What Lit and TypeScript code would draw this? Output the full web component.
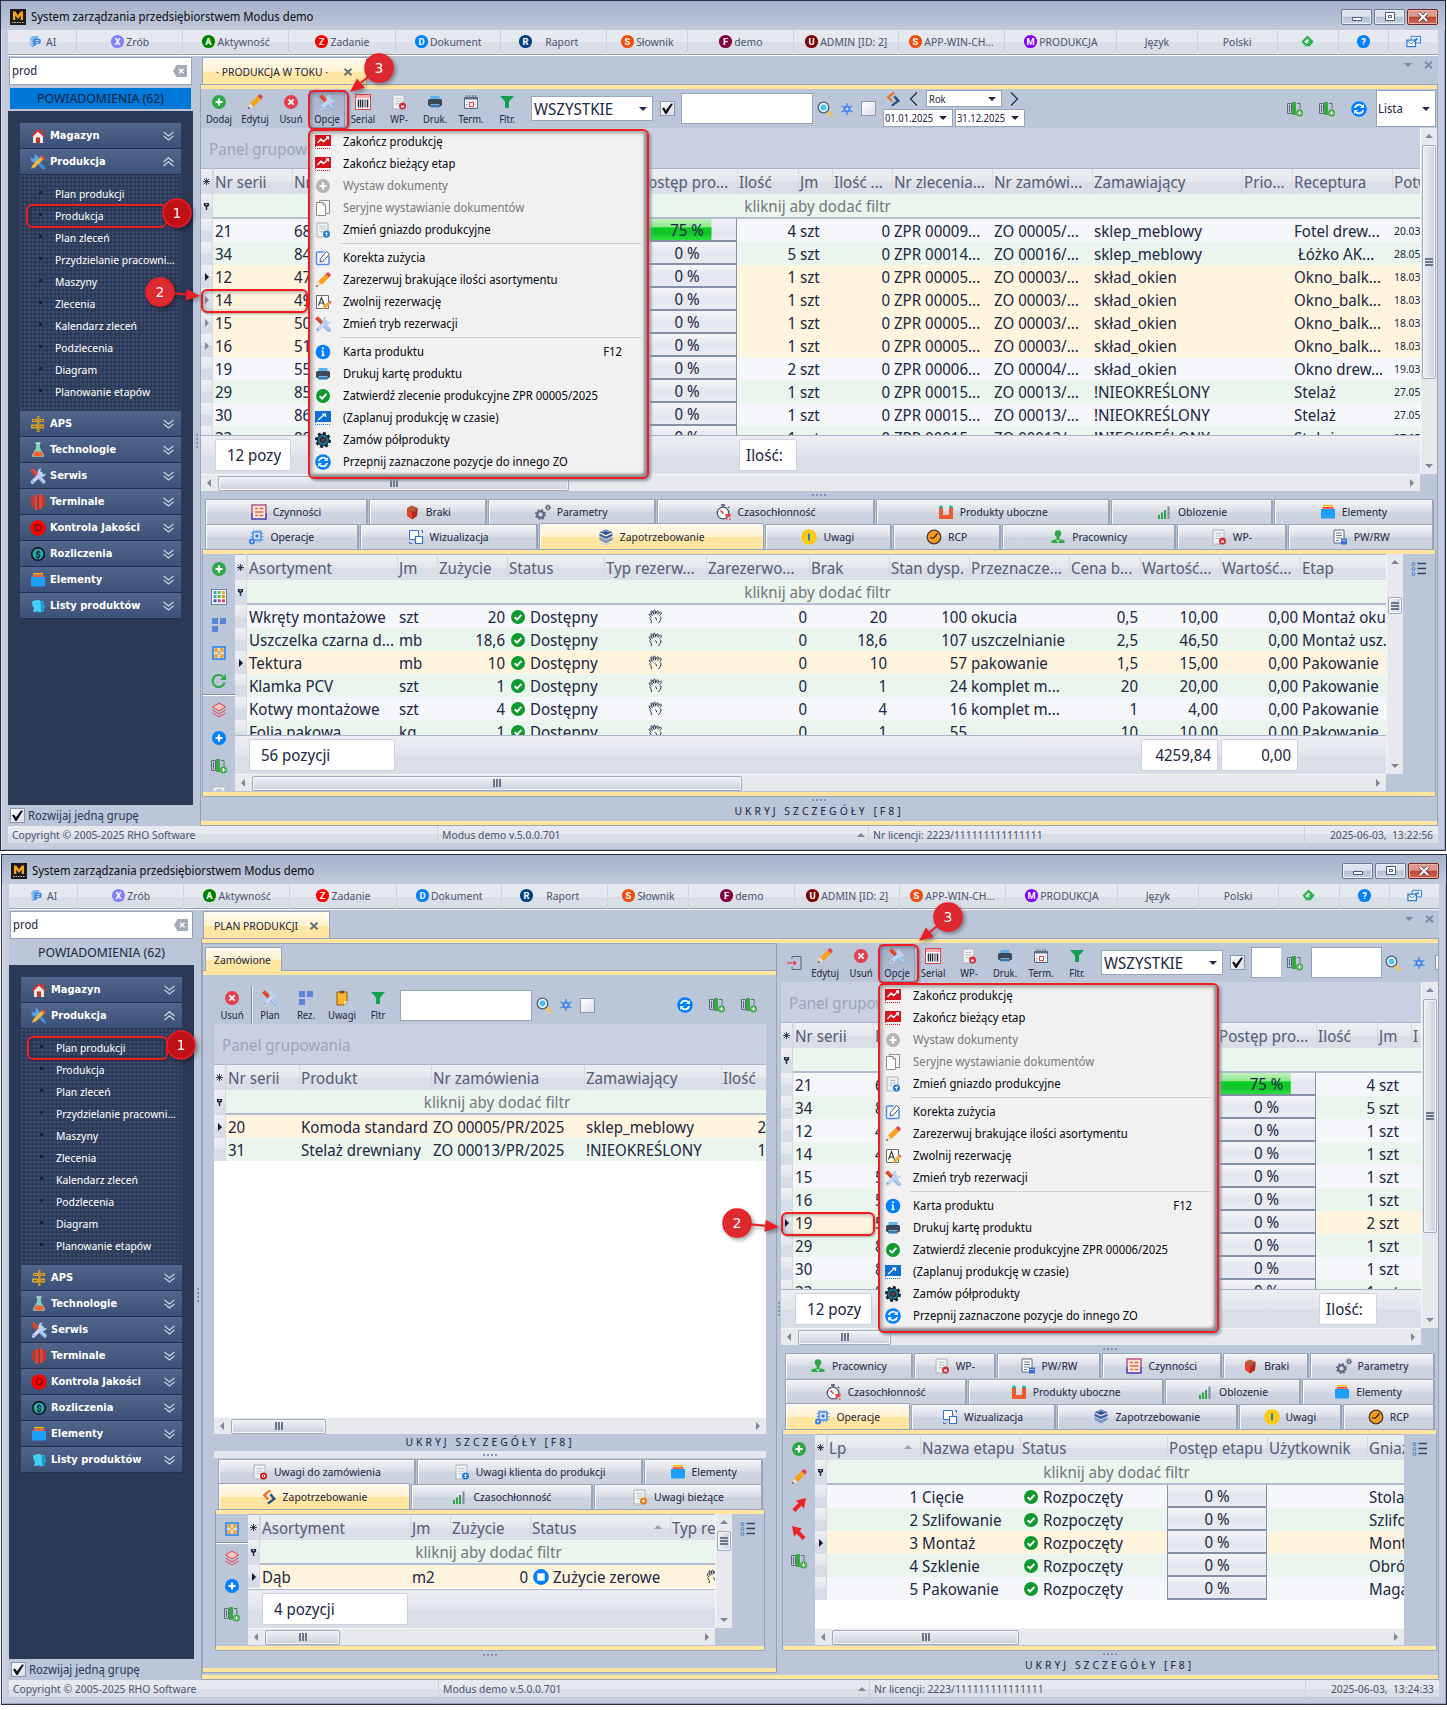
import { LitElement, html, svg, css, nothing, TemplateResult } from "lit";
import { customElement, property } from "lit/decorators.js";
import { classMap } from "lit/directives/class-map.js";

type Draw = ReturnType<typeof svg>;

const disc = (fill: string, letter: string): Draw => svg`
  <circle cx="8" cy="8" r="7" fill=${fill} />
  <text x="8" y="11.500" text-anchor="middle" font-size="10" font-weight="700" fill="#fff" font-family="Roboto, sans-serif">${letter}</text>`;

const docBase = svg`<path d="M2 1h11v14H2z" fill="#eef1f2" stroke="#aab3ba" /><path d="M4.500 4.500h6M4.500 7h6M4.500 9.500h4" stroke="#b9c6c4" fill="none" />`;
const columnsPlus = svg`
  <path d="M.5 2.500h4v10h-4zM10 2.500h3v6" fill="#c3cbd6" stroke="#5a6880" />
  <path d="M2.500 4v7" stroke="#5a6880" />
  <rect x="5" y="1" width="4" height="13" fill="#3aa845" />
  <circle cx="12.500" cy="12" r="3.500" fill="#3aa845" /><path d="M12.500 10v4M10.500 12h4" stroke="#fff" stroke-width="1.200" />`;
const boxes = svg`<path d="M1 1h6v6H1zM9 1h6v6H9zM1 9h6v6H1z" fill="#5b86d8" />`;
const pencil = svg`
  <path d="M3 9.500 10.500 2l3.500 3.500L6.500 13z" fill="#f9a11b" />
  <path d="M10.500 2 12 .8a1.500 1.500 0 0 1 2 0L15.300 2a1.500 1.500 0 0 1 0 2L14 5.500z" fill="#e0444c" />
  <path d="M3 9.500 1 15l5.500-2z" fill="#f3dfc0" /><path d="M1.800 12.800 1 15l2.200-.8z" fill="#333c4c" />`;
const wrenchDriver = svg`
  <path d="m8 8 5.800 5.800" stroke="#8fb4e8" stroke-width="4" stroke-linecap="round" />
  <path d="m9 8.500 5 5" stroke="#c3d9f6" stroke-width="1.500" stroke-linecap="round" />
  <path d="m0 2.800 3-2.600L8.800 6 6 8.800z" fill="#e4502f" /><path d="M1.500 2.500 6.500 7.500" stroke="#a83a22" />
  <path d="M2.500 14 11 5.500" stroke="#c4d6f4" stroke-width="3.600" stroke-linecap="round" />
  <path d="M11.500.5a4.200 4.200 0 1 0 4.300 5L13 6.500 10 3.600z" fill="#bcd2f2" /><circle cx="2.700" cy="13.500" r="1.100" fill="#7f9fd0" />`;
const magnifier = svg`
  <path d="m10.500 10.500 4 4" stroke="#f2c14b" stroke-width="3" stroke-linecap="round" />
  <circle cx="6.500" cy="6.500" r="5.300" fill="#e9f7fd" stroke="#4b6172" stroke-width="1.300" /><circle cx="6.500" cy="6.500" r="3" fill="#4fc0ee" />`;
const zigzag = svg`<path d="M0 1h16v11H0z" fill="#d4141c" /><path d="m2.500 9 3.500-4 2.500 2.500L13.500 3M11 3h2.500v2.500" fill="none" stroke="#fff" stroke-width="1.300" /><path d="M.5 2v12.500H16" fill="none" stroke="#d4141c" stroke-dasharray="1 1" />`;

const ICONS: Record<string, Draw> = {
  logo: svg`<rect width="16" height="16" fill="#1d1a17" /><path d="M3 11V2.500h2.400L8 6.500l2.600-4H13V11h-2.300V6.500L8 10 5.300 6.500V11z" fill="#f9a51a" /><path d="M2 13.500h12" stroke="#cfcac0" stroke-dasharray="1.500 1" />`,
  ai: svg`<path d="M2 5 5 2h6l-1 9-5 3-3-2z" fill="#7ab6f0" /><path d="M6 5h6a1.500 1.500 0 0 1 1.500 1.500V9a1.500 1.500 0 0 1-1.500 1.500H8v2H6z" fill="#3b82e0" /><path d="M8 7h4M8 9h3" stroke="#cfe2fa" /><path d="M3 6v6" stroke="#cfe6fb" />`,
  dX: disc("#8080ff", "X"), dA: disc("#008000", "A"), dZ: disc("#ff0000", "Z"), dD: disc("#0080ff", "D"), dR: disc("#004080", "R"),
  dS: disc("#f04e0c", "S"), dF: disc("#800040", "F"), dU: disc("#800000", "U"), dM: disc("#8000ff", "M"), help: disc("#0080ff", "?"),
  feedly: svg`<path d="m8 1.500 6.500 6.500-4.300 5H5.800L1.500 8z" fill="#2bb24c" /><path d="m5 8.500 3-3 1.200 1.200L6.500 9.500zM7 11l2.500-2.500" fill="#fff" stroke="#fff" stroke-width=".8" />`,
  cards: svg`<path d="M5.500 2.500h10v7h-10z" fill="#e8f1fb" stroke="#2a7bd6" /><path d="M1 6.500h9v7H1z" fill="#fff" stroke="#2a7bd6" stroke-width="1.300" /><path d="m1 7 4.500 3.500L10 7M9 5.500h4M11.500 4v3" fill="none" stroke="#2a7bd6" />`,
  house: svg`<path d="M3 8v7h10V8L8 3.500z" fill="#f5e9e0" /><path d="M8 1 .8 8l1.200 1.200 6-5.700 6 5.700L15.200 8z" fill="#dd3030" /><path d="M6 15V9.500h4V15z" fill="#c0392b" /><path d="M11 2h2v3l-2-2z" fill="#dd3030" />`,
  tools: svg`<path d="m13.500 14-8.500-9" stroke="#3f8fe0" stroke-width="3" stroke-linecap="round" /><path d="M.8 3.500 3 5.300 5 3 3.800.8a4 4 0 1 1-3 2.700z" fill="#5aa5ec" /><path d="m2.500 11 9-9.300 2.800 2.800L5 13.500l-4 1.300z" fill="#f7b43c" /><path d="m10.300 3 1.700-1.700 2.800 2.800L13 5.700z" fill="#e2572f" />`,
  aps: svg`<path d="M7 0h2.500v16H7z" fill="#c99624" /><path d="M2 3h5v3H2zM9.500 3H14v3H9.500zM1 8.500h6v4H1zM9.500 8.500H14v4H9.500z" fill="#d9a92f" /><path d="M3 4.500h3M10.500 4.500H13M2.500 10.500H6M10.500 10.500H13" stroke="#7a5612" />`,
  flask: svg`<path d="M6 1h4v5l4 6.500A2 2 0 0 1 13 15H3a2 2 0 0 1-1-2.500L6 6z" fill="#7fd0bc" /><path d="M4.500 9.500h7l2 3-1.500 2H4l-1.500-2z" fill="#f0683a" /><path d="M5.500 1h5" stroke="#d5ece6" stroke-width="1.300" />`,
  driver: wrenchDriver,
  bars: svg`<path d="M1 2.500h3v10H1zM12 2.500h3v10h-3z" fill="#c0392b" /><path d="M4.500 1H8v15H4.500zM8.500 0H12v15H8.500z" fill="#d9473a" /><path d="M8 1v15" stroke="#8d2a20" />`,
  quality: svg`<circle cx="8" cy="8" r="7.700" fill="#ff0000" /><circle cx="8" cy="7.600" r="3" fill="none" stroke="#7a0b10" stroke-width="1.200" /><path d="m9.300 9 1.700 2" stroke="#7a0b10" stroke-width="1.200" />`,
  dollar: svg`<circle cx="8" cy="8" r="7" fill="#0b0f14" /><circle cx="8" cy="8" r="5.500" fill="#27a9a9" /><text x="8" y="11.500" font-size="9" font-weight="700" text-anchor="middle" fill="#06161a" font-family="Roboto, sans-serif">$</text>`,
  box: svg`<path d="M3 1h10v1.500H3z" fill="#ffb400" /><path d="M2.500 3h11v2h-11z" fill="#f0604a" /><path d="M1 5h14v8.500a1 1 0 0 1-1 1H2a1 1 0 0 1-1-1z" fill="#1ea0f8" />`,
  puzzle: svg`<path d="M2 3.500 6 2h3l2 1.500h3V7l1 1.500-1 2V13l-4 1.500-2-1-5 .5 1-4-1.500-2z" fill="#44cdf5" /><path d="M10.500 4H14v9l-3 1z" fill="#1e9cd0" />`,
  plus: svg`<circle cx="8" cy="8" r="7" fill="#2fa84a" /><path d="M8 4.500v7M4.500 8h7" stroke="#fff" stroke-width="2.200" />`,
  plusBlue: svg`<circle cx="8" cy="8" r="7" fill="#0080ff" /><path d="M8 4.500v7M4.500 8h7" stroke="#fff" stroke-width="2.200" />`,
  plusGray: svg`<circle cx="8" cy="8" r="7" fill="#b4b4b4" /><path d="M8 4.500v7M4.500 8h7" stroke="#fff" stroke-width="2.200" />`,
  pencil,
  cross: svg`<circle cx="8" cy="8" r="7" fill="#e53e4e" /><path d="m5.300 5.300 5.400 5.400M10.700 5.300l-5.400 5.400" stroke="#fff" stroke-width="1.800" />`,
  barcode: svg`<path d="M.5.5h15v15H.5z" fill="#fff" stroke="#e0404a" /><path d="M1 1h14v3H1z" fill="#f5a9ad" /><path d="M3.500 5.500v8M7.500 5.500v8M12.500 5.500v8" stroke="#222b3a" stroke-width="1.600" /><path d="M5.500 5.500v8M10 5.500v8" stroke="#222b3a" />`,
  docRed: svg`${docBase}<circle cx="11.500" cy="12" r="3.500" fill="#dc2a36" /><path d="M10 11.500h3v2h-3z" fill="#fff" />`,
  docRound: svg`${docBase}<circle cx="11.500" cy="12" r="3.500" fill="#dd1515" /><circle cx="11.500" cy="12" r="1.300" fill="none" stroke="#fff" />`,
  docBlue: svg`${docBase}<circle cx="11.500" cy="12" r="3.500" fill="#1f7fd6" /><path d="M11.500 14v-3.500M10 12l1.500-1.500L13 12" fill="none" stroke="#fff" />`,
  docOrange: svg`${docBase}<circle cx="11.500" cy="12" r="3.500" fill="#f07818" /><circle cx="11.500" cy="12" r="1.300" fill="#fff" />`,
  printer: svg`<path d="M3.500 2h9v3h-9z" fill="#5db1f2" /><rect x="1" y="5" width="14" height="7" rx="1.500" fill="#3e4957" /><path d="M3.500 10h9v4h-9z" fill="#67b8f5" /><path d="M3 12h10" stroke="#28323f" />`,
  calendar: svg`<path d="M1.500 3.500h13v11h-13z" fill="#fff" stroke="#5a6880" /><path d="M1.500 3h13v2.500h-13z" fill="#5a6880" /><path d="M4 1v3M7 1v3M10 1v3M12.500 1v3" stroke="#5a6880" /><path d="M3 8h10M3 10.500h10M3 13h10" stroke="#8a96aa" stroke-dasharray="1.500 1.500" /><path d="M6.500 8.500h4v4h-4z" fill="#fff" stroke="#e0404a" />`,
  funnel: svg`<path d="M1 2h14l-5 5.500V14H6V7.500z" fill="#10a050" />`,
  magnifier,
  spark: svg`<path d="M8 2v12M2.500 5l11 6M13.500 5l-11 6" stroke="#4286f0" stroke-width="1.300" /><circle cx="8" cy="8" r="3.500" fill="#4286f0" /><circle cx="8" cy="8" r="1.500" fill="#c9dbf8" />`,
  swap: svg`<path d="M8.500.5 1.500 6l4.800 5.200L8 9.500 5 6.200l5-4z" fill="#e8762c" /><path d="M7.500 15.500 15 10 10.300 4.500 8.500 6.300l3 3.500-5.300 4z" fill="#1d4f8a" />`,
  columnsPlus,
  refresh: svg`<circle cx="8" cy="8" r="7.800" fill="#0080ff" /><path d="M3.800 7A4.300 4.300 0 0 1 11 4.800M12.200 9A4.300 4.300 0 0 1 5 11.200" fill="none" stroke="#fff" stroke-width="1.800" /><path d="M12.800 3v4H9zM3.200 13V9H7z" fill="#fff" />`,
  list: svg`<circle cx="2.500" cy="3" r="1.500" fill="none" stroke="#3f7fc8" /><circle cx="2.500" cy="8" r="1.500" fill="none" stroke="#3f7fc8" /><circle cx="2.500" cy="13" r="1.500" fill="none" stroke="#3f7fc8" /><path d="M6.500 2.500H15M6.500 7.500H15M6.500 12.500H15" stroke="#33415c" stroke-width="1.300" />`,
  palette: svg`<rect x=".5" y=".5" width="15" height="15" fill="#fff" stroke="#6a7fae" /><path d="M2.500 3.500h3M2.500 7.500h3" stroke="#3aa0d8" stroke-width="3" /><path d="M6.700 3.500h3M6.700 7.500h3" stroke="#5cb84a" stroke-width="3" /><path d="M11 3.500h3" stroke="#f2a73b" stroke-width="3" /><path d="M11 7.500h3" stroke="#e88b28" stroke-width="3" /><path d="M2.500 11.800h3" stroke="#3a5fd0" stroke-width="3" /><path d="M6.700 11.800h3" stroke="#b040a8" stroke-width="3" /><path d="M11 11.800h3" stroke="#e0404a" stroke-width="3" />`,
  boxes,
  expand: svg`<path d="M2 2h12v12H2z" fill="#d9dfe6" stroke="#1f80f0" stroke-width="1.500" /><path d="m4.500 4.500 7 7M11.500 4.500l-7 7M4 7V4h3M9 4h3v3M12 9v3H9M7 12H4V9" fill="none" stroke="#f0a020" stroke-width="1.300" />`,
  reload: svg`<path d="M13.500 9.500A6 6 0 1 1 12 3.800" fill="none" stroke="#2fa84a" stroke-width="2.200" /><path d="M15 1v6H9z" fill="#2fa84a" />`,
  layersRed: svg`<path d="m8 1 6.500 4L8 9 1.500 5z" fill="#f7c2c2" stroke="#e0404a" /><path d="m1.500 8 6.500 4 6.500-4M1.500 11 8 15l6.500-4" fill="none" stroke="#e0404a" />`,
  minus: svg`<path d="M2 1h12v14H2z" fill="#f2f4f6" stroke="#b6bec8" /><path d="M5 4h6" stroke="#9aa4b0" />`,
  grid: svg`<rect x="1" y="1" width="14" height="14" fill="#fde8dd" stroke="#c05a90" stroke-width="1.600" /><path d="M4 4.500h3M8.500 4.500h4M4 8h8.500M4 11.500h3M8.500 11.500h4" stroke="#e8663a" stroke-width="1.400" /><path d="M1 9v6h14V9" fill="none" stroke="#4a5cc0" stroke-width="1.600" />`,
  cube: svg`<path d="m3 4 5-2.500L13.500 4 13 12l-5 3.500L3 12z" fill="#e5432d" /><path d="m8 7.500 5.500-3.500L13 12l-5 3.500z" fill="#b52a1c" /><path d="m5 3 5 2.500V8" fill="none" stroke="#5f8a58" stroke-width="1.500" />`,
  gears: svg`<circle cx="5.500" cy="10.500" r="3.300" fill="none" stroke="#56627a" stroke-width="2" /><circle cx="5.500" cy="10.500" r="4.800" fill="none" stroke="#56627a" stroke-dasharray="1.800 2" stroke-width="1.400" /><circle cx="13" cy="3.500" r="1.600" fill="none" stroke="#56627a" stroke-width="1.300" /><circle cx="13" cy="3.500" r="2.700" fill="none" stroke="#56627a" stroke-dasharray="1 1" />`,
  stopwatch: svg`<circle cx="7" cy="9" r="5.800" fill="#fff" stroke="#4a566c" stroke-width="1.300" /><path d="M7 1v2M5 1h4M12 3l1.500 1" stroke="#4a566c" stroke-width="1.300" /><path d="m4.500 6.500 3 3" stroke="#e0303c" stroke-width="1.500" /><path d="M9 10h6l-1 3h-4z" fill="#e8434e" /><path d="M10 15h1.500M13 15h1.500" stroke="#e8434e" stroke-width="1.500" />`,
  magnet: svg`<path d="M1 4h4v7h6V4h4v11H1z" fill="#f2592a" /><path d="M1 4V2.500L4 1l1 3zM11 4l1-3 3 1.500V4z" fill="#17b5a6" />`,
  chart: svg`<path d="M3 15v-4M6 15V8.500M9 15V6" stroke="#2fa84a" stroke-width="2" /><path d="M12.500 15V2.500" stroke="#7f8ca3" stroke-width="2" />`,
  chip: svg`<rect x="4" y="2" width="10" height="10" rx="1" fill="#6a9df0" /><path d="M6 .5v13M9 .5v13M12 .5v13M2.500 4.500h13M2.500 7.500h13M2.500 10.500h13" stroke="#6a9df0" /><path d="M6 4h6v6H6z" fill="#dfeafc" /><path d="M7.500 5.500h3v3h-3z" fill="#3a72d0" /><circle cx="4" cy="12.500" r="3" fill="#3f7fe8" /><circle cx="4" cy="12.500" r="1.100" fill="#e2ecfb" />`,
  frames: svg`<path d="M1.500 1.500h9v9h-9z" fill="#fff" stroke="#3a6fd0" /><path d="M7.500 7.500h7v7h-7z" fill="#fff" stroke="#3a6fd0" stroke-width="1.200" /><path d="M13 1.500h1.500V4M1.500 13v1.500H4" fill="none" stroke="#3a6fd0" />`,
  stack: svg`<path d="m8 .5 6.500 2.700L8 6 1.500 3.200z" fill="#2f4f8f" /><path d="m1.500 4.500 6.500 3 6.500-3V7L8 10 1.500 7z" fill="#3a5ea5" /><path d="m1.500 8 6.500 3 6.500-3v3L8 14.500 1.500 11z" fill="#7f9ac8" /><path d="m4 3.200 4-1.500 4 1.500" fill="none" stroke="#84b4e8" /><path d="m3 14 5 2 5-2" stroke="#c8d4e8" fill="none" />`,
  note: svg`<circle cx="8" cy="8" r="7.800" fill="#fdc912" /><path d="M8 4.500v7" stroke="#2b7fb8" stroke-width="2" />`,
  clock: svg`<circle cx="8" cy="8" r="6.800" fill="#f79a1e" stroke="#463c34" stroke-width="1.300" /><path d="M7 9.500 11.500 4.500M7 9.500l-3-1" stroke="#2b2622" stroke-width="1.300" />`,
  person: svg`<circle cx="8" cy="4.500" r="3.300" fill="#2fa84a" /><path d="M6.500 6h3v4l5 1.500V14h-13v-2.500l5-1.500z" fill="#2fa84a" /><path d="M8 11v3M6 10.500 8 13l2-2.500" stroke="#bfe8c8" fill="none" />`,
  sheet: svg`<path d="M2 1h10v13H2z" fill="#fff" stroke="#5a6880" /><path d="M4 4h6M4 6.500h6M4 9h6M4 11.500h3" stroke="#6b7a94" /><path d="M9 9.500h6v6H9z" fill="#3f6fd0" /><path d="M10 11.500h4" stroke="#9cc0f5" />`,
  clip: svg`<path d="M3 2h10v9l-3 4H3z" fill="#fbb62a" stroke="#8a5a10" /><path d="M6 .8h4v2.500H6z" fill="#6b4a20" /><path d="M13 11h-3v4z" fill="#fff2c8" />`,
  arrowNE: svg`<path d="m1.500 12 6-6L5 3.500 15 1l-2 10.500-2.700-2.700L4.300 15z" fill="#f01f24" />`,
  arrowNW: svg`<path d="m14.500 12-6-6L11 3.500 1 1l2 10.500 2.700-2.700 6 6.200z" fill="#f01f24" />`,
  login: svg`<path d="M6 4V1.500h9v13H6V12" fill="none" stroke="#56627a" /><path d="M1 8h8" stroke="#e8434e" stroke-width="1.300" /><path d="m7.500 5.200 3.500 2.800-3.500 2.800z" fill="#e8434e" />`,
  zigzag,
  plan: svg`<path d="M0 1h16v11H0z" fill="#0f6fd6" /><path d="m3 10 7-6M7 4h3.500v3" fill="none" stroke="#fff" stroke-width="1.200" /><path d="M.5 2v12.500H16" fill="none" stroke="#0f6fd6" stroke-dasharray="1 1" />`,
  pages: svg`<path d="M4.500.5h10v13h-10z" fill="#f4f4f4" stroke="#8e8e8e" /><path d="M1.500 2.500H8l2.500 2.500v10.500h-9z" fill="#fff" stroke="#8e8e8e" /><path d="M8 2.500V5h2.500" fill="none" stroke="#8e8e8e" />`,
  edit: svg`<path d="M14 6v7.500a1 1 0 0 1-1 1H2.500a1 1 0 0 1-1-1V3a1 1 0 0 1 1-1H9" fill="#f4f8ff" stroke="#4f8ff0" stroke-width="1.500" /><path d="m5.500 8.500 6-7 3 2.500-6 7-3.500 1z" fill="#fff" stroke="#49546a" />`,
  letterPen: svg`<path d="M1.500 1.500h12v13h-12z" fill="#fff" stroke="#6a6a6a" /><path d="m3.500 11.500 3-8 3 8M4.500 9h4" fill="none" stroke="#333" stroke-width="1.100" /><path d="m8.500 12.500 5-5 2 2-5 5-2.500.5z" fill="#f7a823" /><path d="m13.500 7.500 1-1 2 2-1 1z" fill="#e0444c" />`,
  info: svg`<circle cx="8" cy="8" r="7.300" fill="#0080ff" /><path d="M8 7v4.500M6.700 7H8M6.500 11.500h3" stroke="#fff" stroke-width="1.500" /><circle cx="8" cy="4.300" r="1.100" fill="#fff" />`,
  check: svg`<circle cx="8" cy="8" r="7" fill="#0f9a2e" /><path d="m4.700 8.200 2.400 2.400 4.300-4.700" fill="none" stroke="#fff" stroke-width="2" />`,
  stop: svg`<circle cx="8" cy="8" r="7.900" fill="#0080ff" /><path d="M4.300 4.300h7.400v7.400H4.300z" fill="#fff" />`,
  cog: svg`<circle cx="8" cy="8" r="6.700" fill="none" stroke="#10242e" stroke-width="2.600" stroke-dasharray="3 2.200" /><circle cx="8" cy="8" r="5.800" fill="#1c6c86" stroke="#10242e" /><circle cx="8" cy="8" r="2.500" fill="#7b3a3a" stroke="#10242e" />`,
  hand: svg`<path d="M3.500 9 1.500 6.500c-.6-1.500.8-2 1.500-1L5 7.500M4.500 6 3 3c0-1.300 1.400-1.400 1.700-.3L6.500 6M6.200 5 6 2c.3-1.100 1.600-1 1.700.1L8.200 5.500M8.500 4.500 9.300 2.500c.6-1 1.900-.5 1.700.5L10.500 6M1.500 9 3.500 12v3M11.500 4.500l1.500-1c1.200-.3 1.700.8 1 1.700L12.500 7M13 8l1 1.500-1 3-2 2.500M8 9l1.500 3" fill="none" stroke="#1f2a44" />`,
};

const icon = (name: string) => html`<svg class="icon" viewBox="0 0 16 16" aria-hidden="true">${ICONS[name]}</svg>`;
const arrowDown = html`<svg class="caret" viewBox="0 0 8 4" aria-hidden="true"><path d="M0 0h8L4 4z" fill="currentColor" /></svg>`;

interface Col { t: string; w?: number; k?: "n" | "p" | "s" | "h" | "d"; sort?: boolean }
interface Row { c: string[]; sel?: boolean; mark?: "cur" | "multi" }
interface Foot { w: number; t?: string; right?: boolean }
interface Scroll { lead: number; size: number }
interface GridSpec {
  cols: Col[]; rows: Row[]; size: string; group?: boolean; foot?: Foot[];
  h: Scroll; v?: Scroll; overlay?: TemplateResult; label: string;
}
interface Tab { i: string; t: string; w: number; on?: boolean }

const cell = (col: Col, value: string) => {
  if (col.k === "p") {
    return html`<div class="progress" style="background-size:${value}% 100%, 100% 100%">${value} %</div>`;
  }
  if (col.k === "h") return icon("hand");
  if (col.k === "s") return html`<span class="status">${icon(value.startsWith("Zuż") ? "stop" : "check")}${value}</span>`;
  return value;
};

const hscroll = (s: Scroll) => html`
  <div class="hscroll">
    <i class="tri left"></i><span class="thumb" style="width:${s.size}px"><b></b></span><i class="tri right"></i>
  </div>`;
const vscroll = (s: Scroll) => html`
  <div class="vscroll">
    <i class="tri up"></i><span class="thumb" style="margin-top:${s.lead}px;height:${s.size}px"><b></b></span><i class="tri down"></i>
  </div>`;

const grid = (g: GridSpec) => html`
  <div class=${classMap({ grid: true, "has-v": !!g.v })}>
    <div class="grid-main">
      ${g.group ? html`<div class="group-panel">Panel grupowania</div>` : nothing}
      <div class="viewport ${g.size}">
        <table aria-label=${g.label}>
          <colgroup><col class="c-ind">${g.cols.map(c => c.w ? html`<col style="width:${c.w}px">` : html`<col>`)}</colgroup>
          <thead>
            <tr><th class="ind"><svg viewBox="0 0 8 8" class="tiny"><path d="M4 0v8M0 4h8M1 1l6 6M7 1 1 7" stroke="#1f2a44" /></svg></th>
              ${g.cols.map(c => html`<th scope="col">${c.t}${c.sort ? html`<i class="tri up sort"></i>` : nothing}</th>`)}</tr>
            <tr class="filter"><td class="ind"><svg viewBox="0 0 8 8" class="tiny"><path d="M1 0h6v3L4.800 4.500V8H3.200V4.500L1 3z" fill="#1f2a44" /><path d="M3 1.500h2" stroke="#fff" /></svg></td>
              <td colspan=${g.cols.length}>kliknij aby dodać filtr</td></tr>
          </thead>
          <tbody>
            ${g.rows.map((r, i) => html`
              <tr class=${classMap({ sel: !!r.sel, even: i % 2 === 1 })}>
                <td class="ind">${r.mark ? html`<i class="tri right ${r.mark}"></i>` : nothing}</td>
                ${g.cols.map((c, j) => html`<td class="k-${c.k ?? "t"}">${cell(c, r.c[j] ?? "")}</td>`)}
              </tr>`)}
          </tbody>
        </table>
      </div>
      ${g.foot ? html`<div class="foot"><span class="foot-lead"></span>${g.foot.map(f => html`
        <span class="foot-slot" style="width:${f.w}px">${f.t ? html`<output class=${classMap({ sum: true, right: !!f.right })}><span>${f.t}</span></output>` : nothing}</span>`)}</div>` : nothing}
    </div>
    ${g.v ? vscroll(g.v) : nothing}
    ${hscroll(g.h)}
    ${g.overlay ?? nothing}
  </div>`;

const tabRow = (tabs: Tab[]) => html`
  <div class="tabs" role="tablist">${tabs.map(t => html`
    <button role="tab" aria-selected=${t.on ? "true" : "false"} class=${classMap({ tab: true, on: !!t.on })} style="flex-grow:${t.w}">${icon(t.i)}<span>${t.t}</span></button>`)}
  </div>`;

const sideTools = (names: string[], label: string) => html`
  <div class="side-tools" aria-label=${label}>${names.map(n => n === "-" ? html`<hr>` : html`<button aria-label=${n}>${icon(n)}</button>`)}</div>`;

const detail = (tools: string[], g: GridSpec) => html`
  <section class="panel">
    ${sideTools(tools, "Narzędzia")}
    <div class="panel-grid">${grid(g)}</div>
    <div class="side-tools"><button aria-label="Kolumny">${icon("list")}</button></div>
  </section>`;

/* Numbered callout: disc at the origin, arrow towards (x, y). */
const callout = (n: number, cls: string, x = 0, y = 0) => {
  const len = Math.hypot(x, y);
  const ux = len ? x / len : 0, uy = len ? y / len : 0;
  const bx = x - ux * 14, by = y - uy * 14;
  return html`<svg class="callout ${cls}" viewBox="-16 -16 32 32" aria-hidden="true">
    ${len ? svg`<path d="M${ux * 13} ${uy * 13}L${bx} ${by}" stroke="#ee1c24" stroke-width="2" />
      <path d="M${x} ${y}L${bx - uy * 6} ${by + ux * 6}L${bx + uy * 6} ${by - ux * 6}z" fill="#ee1c24" />` : nothing}
    <circle r="14" fill=${n === 1 ? "#bf1016" : "#dc2a30"} stroke="#ee1c24" stroke-width="1.500" />
    <text y="5" text-anchor="middle" class="num">${n}</text>
  </svg>`;
};

const toolButton = (i: string, t: string) => html`<button class="tool">${icon(i)}<span>${t}</span></button>`;
const checkbox = (label: string, on = false) => html`<input class="check" type="checkbox" aria-label=${label} ?checked=${on}>`;
const combo = (cls: string, value: string, label: string) => html`
  <span class="combo ${cls}"><select aria-label=${label}><option>${value}</option></select>${arrowDown}</span>`;

const contextMenu = (order: string) => {
  const items: (null | [string, string, string?, boolean?])[] = [
    ["zigzag", "Zakończ produkcję"], ["zigzag", "Zakończ bieżący etap"], ["plusGray", "Wystaw dokumenty", "", true],
    ["pages", "Seryjne wystawianie dokumentów", "", true], ["docBlue", "Zmień gniazdo produkcyjne"], null,
    ["edit", "Korekta zużycia"], ["pencil", "Zarezerwuj brakujące ilości asortymentu"], ["letterPen", "Zwolnij rezerwację"],
    ["driver", "Zmień tryb rezerwacji"], null, ["info", "Karta produktu", "F12"], ["printer", "Drukuj kartę produktu"],
    ["check", `Zatwierdź zlecenie produkcyjne ZPR ${order}`], ["plan", "(Zaplanuj produkcję w czasie)"],
    ["cog", "Zamów półprodukty"], ["refresh", "Przepnij zaznaczone pozycje do innego ZO"],
  ];
  return html`<div class="menu" role="menu">${items.map(m => m
    ? html`<button role="menuitem" class="menu-item" ?disabled=${!!m[3]}>${icon(m[0])}<span>${m[1]}</span>${m[2] ? html`<kbd>${m[2]}</kbd>` : nothing}</button>`
    : html`<hr>`)}</div>`;
};

const options = (order: string) => html`
  <div class="anchor">
    <button class="tool pressed" aria-haspopup="menu">${icon("driver")}<span>Opcje</span></button>
    <span class="mark mark-tool"></span>
    ${contextMenu(order)}
    ${callout(3, "at-tool", -29, 24)}
  </div>`;

const orderTools = (order: string) => html`
  ${toolButton("pencil", "Edytuj")}${toolButton("cross", "Usuń")}${options(order)}
  ${toolButton("barcode", "Serial")}${toolButton("docRed", "WP-")}${toolButton("printer", "Druk.")}
  ${toolButton("calendar", "Term.")}${toolButton("funnel", "Fltr.")}`;

const T = {
  czyn: (w: number) => ({ i: "grid", t: "Czynności", w }), braki: (w: number) => ({ i: "cube", t: "Braki", w }),
  param: (w: number) => ({ i: "gears", t: "Parametry", w }), czas: (w: number) => ({ i: "stopwatch", t: "Czasochłonność", w }),
  ubo: (w: number) => ({ i: "magnet", t: "Produkty uboczne", w }), obl: (w: number) => ({ i: "chart", t: "Oblozenie", w }),
  elem: (w: number) => ({ i: "box", t: "Elementy", w }), oper: (w: number, on = false) => ({ i: "chip", t: "Operacje", w, on }),
  wiz: (w: number) => ({ i: "frames", t: "Wizualizacja", w }), zap: (w: number, on = false) => ({ i: "stack", t: "Zapotrzebowanie", w, on }),
  uwagi: (w: number) => ({ i: "note", t: "Uwagi", w }), rcp: (w: number) => ({ i: "clock", t: "RCP", w }),
  prac: (w: number) => ({ i: "person", t: "Pracownicy", w }), wp: (w: number) => ({ i: "docRed", t: "WP-", w }), pw: (w: number) => ({ i: "sheet", t: "PW/RW", w }),
};

const okno = ["ZPR 00005...", "ZO 00003/...", "skład_okien", "", "Okno_balk...", "18.03"];
const stelaz = ["ZPR 00015...", "ZO 00013/...", "!NIEOKREŚLONY", "", "Stelaż", "27.05"];
const ORDERS: string[][] = [
  ["21", "68", "", "75", "4", "szt", "0", "ZPR 00009...", "ZO 00005/...", "sklep_meblowy", "", "Fotel drew...", "20.03"],
  ["34", "84", "", "0", "5", "szt", "0", "ZPR 00014...", "ZO 00016/...", "sklep_meblowy", "", "\u00a0Łóżko AK...", "28.05"],
  ["12", "47", "", "0", "1", "szt", "0", ...okno],
  ["14", "49", "", "0", "1", "szt", "0", ...okno],
  ["15", "50", "", "0", "1", "szt", "0", ...okno],
  ["16", "51", "", "0", "1", "szt", "0", ...okno],
  ["19", "55", "", "0", "2", "szt", "0", "ZPR 00006...", "ZO 00004/...", "skład_okien", "", "Okno drew...", "19.03"],
  ["29", "85", "", "0", "1", "szt", "0", ...stelaz],
  ["30", "86", "", "0", "1", "szt", "0", ...stelaz],
  ["33", "88", "", "0", "1", "szt", "0", ...stelaz],
];

const ordersGrid = (): GridSpec => ({
  label: "Produkcja w toku", size: "tall", group: true,
  cols: [{ t: "Nr serii", w: 79 }, { t: "Nr", w: 79 }, { t: "", w: 266 }, { t: "Postęp pro...", w: 100, k: "p" }, { t: "Ilość", w: 61, k: "n" },
    { t: "Jm", w: 34 }, { t: "Ilość ...", w: 60, k: "n" }, { t: "Nr zlecenia...", w: 100 }, { t: "Nr zamówi...", w: 100 }, { t: "Zamawiający", w: 150 },
    { t: "Prio...", w: 50 }, { t: "Receptura", w: 100 }, { t: "Potw", k: "d" }],
  rows: ORDERS.map((c, i) => ({ c, sel: i >= 2 && i <= 5, mark: i === 2 ? "cur" : i > 2 && i <= 5 ? "multi" : undefined })),
  foot: [{ w: 79, t: "12 pozy" }, { w: 445 }, { w: 61, t: "Ilość:" }],
  h: { lead: 0, size: 351 }, v: { lead: 0, size: 234 },
  overlay: html`<span class="mark mark-row first"></span>${callout(2, "at-row-first", 40, 4)}`,
});

const planOrdersGrid = (): GridSpec => ({
  label: "Serie", size: "tall", group: true,
  cols: [{ t: "Nr serii", w: 80 }, { t: "Nr", w: 344 }, { t: "Postęp pro...", w: 99, k: "p" }, { t: "Ilość", w: 61, k: "n" }, { t: "Jm", w: 34 }, { t: "I" }],
  rows: ORDERS.map((c, i) => ({ c: [c[0], c[1], c[3], c[4], c[5]], sel: i === 6, mark: i === 6 ? "cur" : undefined })),
  foot: [{ w: 80, t: "12 pozy" }, { w: 444 }, { w: 61, t: "Ilość:" }],
  h: { lead: 0, size: 93 }, v: { lead: 0, size: 234 },
  overlay: html`<span class="mark mark-row second"></span>${callout(2, "at-row-second", 42, 4)}`,
});

const demandGrid = (): GridSpec => ({
  label: "Zapotrzebowanie", size: "mid",
  cols: [{ t: "Asortyment", w: 150 }, { t: "Jm", w: 40 }, { t: "Zużycie", w: 70, k: "n" }, { t: "Status", w: 97, k: "s" }, { t: "Typ rezerw...", w: 102, k: "h" },
    { t: "Zarezerwo...", w: 103, k: "n" }, { t: "Brak", w: 80, k: "n" }, { t: "Stan dysp.", w: 80, k: "n" }, { t: "Przeznacze...", w: 100 }, { t: "Cena b...", w: 71, k: "n" },
    { t: "Wartość...", w: 80, k: "n" }, { t: "Wartość...", w: 80, k: "n" }, { t: "Etap" }],
  rows: [
    ["Wkręty montażowe", "szt", "20", "Dostępny", "", "0", "20", "100", "okucia", "0,5", "10,00", "0,00", "Montaż okuć"],
    ["Uszczelka czarna d...", "mb", "18,6", "Dostępny", "", "0", "18,6", "107", "uszczelnianie", "2,5", "46,50", "0,00", "Montaż usz..."],
    ["Tektura", "mb", "10", "Dostępny", "", "0", "10", "57", "pakowanie", "1,5", "15,00", "0,00", "Pakowanie"],
    ["Klamka PCV", "szt", "1", "Dostępny", "", "0", "1", "24", "komplet m...", "20", "20,00", "0,00", "Pakowanie"],
    ["Kotwy montażowe", "szt", "4", "Dostępny", "", "0", "4", "16", "komplet m...", "1", "4,00", "0,00", "Pakowanie"],
    ["Folia pakowa", "kg", "1", "Dostępny", "", "0", "1", "55", "", "10", "10,00", "0,00", "Pakowanie"],
  ].map((c, i) => ({ c, sel: i === 2, mark: i === 2 ? "cur" as const : undefined })),
  foot: [{ w: 149, t: "56 pozycji" }, { w: 743 }, { w: 80, t: "4259,84", right: true }, { w: 80, t: "0,00", right: true }],
  h: { lead: 0, size: 490 }, v: { lead: 26, size: 17 },
});

const orderedGrid = (): GridSpec => ({
  label: "Zamówione", size: "open", group: true,
  cols: [{ t: "Nr serii", w: 73 }, { t: "Produkt", w: 132 }, { t: "Nr zamówienia", w: 153 }, { t: "Zamawiający", w: 137 }, { t: "Ilość", k: "n" }],
  rows: [
    { c: ["20", "Komoda standard", "ZO 00005/PR/2025", "sklep_meblowy", "2"], sel: true, mark: "cur" },
    { c: ["31", "Stelaż drewniany", "ZO 00013/PR/2025", "!NIEOKREŚLONY", "1"] },
  ],
  h: { lead: 0, size: 95 },
});

const planDemandGrid = (): GridSpec => ({
  label: "Zapotrzebowanie", size: "small",
  cols: [{ t: "Asortyment", w: 150 }, { t: "Jm", w: 40 }, { t: "Zużycie", w: 80, k: "n" }, { t: "Status", w: 140, k: "s", sort: true }, { t: "Typ rez", k: "h" }],
  rows: [{ c: ["Dąb", "m2", "0", "Zużycie zerowe", ""], sel: true, mark: "cur" }],
  foot: [{ w: 149, t: "4 pozycji" }],
  h: { lead: 0, size: 75 }, v: { lead: 0, size: 20 },
});

const stagesGrid = (): GridSpec => ({
  label: "Operacje", size: "stages",
  cols: [{ t: "Lp", w: 93, k: "n", sort: true }, { t: "Nazwa etapu", w: 100 }, { t: "Status", w: 147, k: "s" }, { t: "Postęp etapu", w: 100, k: "p" }, { t: "Użytkownik", w: 100 }, { t: "Gniazdo" }],
  rows: [["1", "Cięcie", "Stolarnia"], ["2", "Szlifowanie", "Szlifowanie"], ["3", "Montaż", "Montaż"], ["4", "Szklenie", "Obróbka"], ["5", "Pakowanie", "Magazyn"]]
    .map((c, i) => ({ c: [c[0], c[1], "Rozpoczęty", "0", "", c[2]], sel: i === 2, mark: i === 2 ? "cur" as const : undefined })),
  h: { lead: 0, size: 187 },
});

const MENUBAR: [number, string, string, string?][] = [
  [69, "ai", "AI", "gap"], [106, "dX", "Zrób"], [106, "dA", "Aktywność"], [107, "dZ", "Zadanie"], [105, "dD", "Dokument"], [96, "dR", "Raport", "wide"],
  [81, "dS", "Słownik"], [106, "dF", "demo"], [105, "dU", "ADMIN [ID: 2]"], [106, "dS", "APP-WIN-CH..."], [113, "dM", "PRODUKCJA"], [80, "", "Język"],
  [80, "", "Polski"], [61, "feedly", ""], [49, "help", ""], [50, "cards", ""],
];
const GROUPS: [string, string][] = [["house", "Magazyn"], ["tools", "Produkcja"], ["aps", "APS"], ["flask", "Technologie"], ["driver", "Serwis"],
  ["bars", "Terminale"], ["quality", "Kontrola Jakości"], ["dollar", "Rozliczenia"], ["box", "Elementy"], ["puzzle", "Listy produktów"]];
const PAGES = ["Plan produkcji", "Produkcja", "Plan zleceń", "Przydzielanie pracowni...", "Maszyny", "Zlecenia", "Kalendarz zleceń", "Podzlecenia", "Diagram", "Planowanie etapów"];

@customElement("modus-window")
export class ModusWindow extends LitElement {
  @property() view: "production" | "plan" = "production";

  static styles = css`
    :host { display: block; color: #1f2a44; font: 11px/14px "Noto Sans Display", "DejaVu Sans Condensed", "Noto Sans", sans-serif; }
    *, *::before, *::after { box-sizing: border-box; }
    button, input, select { font: inherit; color: inherit; margin: 0; padding: 0; border: 0; background: none; border-radius: 0; outline: 0; }
    a { color: inherit; text-decoration: none; }
    hr { margin: 0; border: 0; }
    .icon { width: 16px; height: 16px; flex: none; display: block; overflow: visible; }
    .tiny { width: 7px; height: 7px; display: block; margin: 0 auto; }
    .caret { width: 8px; height: 4px; }

    .window { border: 1px solid #262f45; padding: 0 7px 7px; background: #c6cede; box-shadow: inset 1px 1px #dfe5ef, inset -1px -1px #9aa7bf; }
    .title { display: flex; align-items: center; height: 29px; margin: 0 -7px; padding: 3px 7px 0 9px; gap: 5px; background: linear-gradient(#a5b1ca, #c2cbdb); color: #0c0f14; font-size: 12px; }
    .title h1 { margin: 0; font: inherit; flex: 1; }
    .win-buttons { display: flex; gap: 2px; }
    .win-button { width: 31px; height: 16px; display: grid; place-items: center; border: 1px solid #6b7a96; border-radius: 2px; background: linear-gradient(#dbe3ee 45%, #b3c0d4 50%, #c7d1e1); box-shadow: inset 0 0 0 1px #e9eef5; }
    .win-button.close { background: linear-gradient(#dd9a8c 45%, #bb4330 50%, #cf6a54); border-color: #6c2a26; box-shadow: inset 0 0 0 1px #e9b5aa; }
    .win-button svg { width: 12px; height: 10px; }
    .menubar { display: flex; height: 26px; border-bottom: 1px solid #fff; box-shadow: inset 0 -1px #98a0ae; background: linear-gradient(#e6e9ef 50%, #dadee7 50%); color: #4d5870; }
    .menubar button { flex-basis: 0; flex-shrink: 1; min-width: 0; display: flex; align-items: center; justify-content: center; gap: 1px; border-left: 1px solid #cdd2dc; white-space: nowrap; padding-bottom: 2px; }
    .menubar button:first-child { border-left: 0; }
    .menubar .icon { width: 15px; height: 15px; }
    .menubar .gap { gap: 3px; }
    .menubar .wide { gap: 12px; padding-right: 10px; }

    .body { display: flex; background: #bbc6d8; }
    .side { width: 185px; flex: none; display: flex; flex-direction: column; }
    .search { display: flex; align-items: center; height: 28px; margin: 1px 1px 3px; padding: 0 4px 0 2px; border: 1px solid #98a4b8; background: #fff; font-size: 12px; }
    .search input { flex: 1; min-width: 0; }
    .search button { display: block; }
    .search svg { width: 14px; height: 12px; display: block; }
    .notice { height: 21px; margin: 0 2px; padding-bottom: 1px; font-size: 13px; }
    .production .notice { background: #0078d7; color: #10223e; }
    .nav { flex: 1; margin-top: 2px; padding: 12px 12px 0; background: #2b3957; color: #fff; }
    .nav-group { display: flex; align-items: center; width: 100%; height: 26px; padding: 0 7px 0 10px; gap: 4px; border-bottom: 1px solid #24304b; background: linear-gradient(#52658a, #3c5178); font: bold 11px/14px "DejaVu Sans Condensed", "Noto Sans", sans-serif; text-align: left; }
    .nav-group span { flex: 1; }
    .nav-group svg.chev { width: 11px; height: 10px; }
    .pages { list-style: none; margin: 0; padding: 8px 0; background: radial-gradient(circle at 1px 1px, #3a4b6d 30%, transparent 50%) 0 0 / 4px 4px #2b3957; }
    .pages li { position: relative; display: flex; align-items: center; height: 22px; }
    .pages li::before { content: ""; width: 3px; height: 3px; margin: 0 13px 4px 19px; background: #15203a; }
    .single { display: flex; align-items: center; gap: 3px; height: 21px; padding-left: 2px; font-size: 12px; color: #2c3a58; }
    .splitter { width: 7px; flex: none; display: grid; place-items: center; }
    .splitter::before { content: ""; width: 2px; height: 14px; background: repeating-linear-gradient(#8392ae 0 2px, transparent 2px 4px); }
    .vdots { display: grid; place-items: center; width: 4px; flex: none; }
    .vdots::before { content: ""; width: 2px; height: 14px; background: repeating-linear-gradient(#8392ae 0 2px, transparent 2px 4px); }

    .check { appearance: none; width: 15px; height: 15px; flex: none; border: 1px solid #8b97ad; background: linear-gradient(135deg, #fff, #d9dde5); display: grid; place-items: center; }
    .check:checked::after { content: ""; width: 11px; height: 11px; background: #0d1117; clip-path: polygon(0 48%, 18% 42%, 36% 66%, 82% 4%, 100% 6%, 42% 100%, 30% 100%); }

    .main { flex: 1; min-width: 0; display: flex; flex-direction: column; }
    .doc-tabs { display: flex; height: 28px; padding: 1px 5px 0 2px; }
    .doc-tab { display: flex; align-items: center; gap: 11px; padding: 0 10px; height: 28px; border: 1px solid #98a4b8; border-bottom: 0; background: linear-gradient(#fffaf0, #fff2cf 50%, #ffe6a3 54%, #ffe6a3); }
    .doc-tab svg { width: 10px; height: 8px; color: #6a7078; }
    .production .doc-tab { padding: 0 13px 0 13px; gap: 15px; }
    .doc-actions { margin-left: auto; display: flex; gap: 12px; align-items: center; height: 16px; color: #7c8ba6; }
    .doc-actions svg.x { width: 9px; height: 8px; }
    .doc { border: 1px solid #98a4b8; display: flex; flex-direction: column; }
    .doc::before, .doc::after { content: ""; height: 4px; background: #ffe5a0; }

    .toolbar { display: flex; align-items: center; height: 39px; }
    .tool { width: 36px; height: 38px; flex: none; display: flex; flex-direction: column; align-items: center; gap: 3px; padding-top: 4px; font-size: 10px; line-height: 12px; white-space: nowrap; }
    .pressed { border: 1px solid #8e9bb4; background: linear-gradient(#a3b0c8, #b5c1d5); padding-top: 3px; }
    .anchor { position: relative; }
    .combo { position: relative; display: inline-flex; align-items: center; border: 1px solid #98a4b8; background: #fff; flex: none; }
    .combo select, .combo input { appearance: none; width: 100%; height: 100%; padding-left: 2px; }
    .combo .caret { position: absolute; right: 5px; }
    .combo.big { width: 122px; height: 25px; font-size: 16px; line-height: 22px; }
    .combo.year { width: 76px; height: 17px; font-size: 10px; }
    .combo.date { width: 70px; height: 18px; font-size: 10px; }
    .combo.date input { padding-left: 1px; }
    .combo.list { width: 60px; height: 37px; font-size: 12px; }
    .combo.list select { padding-left: 1px; }
    .field { height: 31px; border: 1px solid #98a4b8; background: #fff; flex: none; width: 132px; }
    .field.tiny-field { width: 30px; border-right: 0; }
    .field.mid-field { width: 71px; }
    .icon-button { display: block; flex: none; }
    .period { display: flex; flex-direction: column; gap: 2px; margin-left: 7px; }
    .period div { display: flex; align-items: center; height: 18px; gap: 2px; }
    .period .nav-period { gap: 8px; padding-left: 2px; height: 17px; }
    .nav-period button { display: block; }
    .nav-period svg.angle { width: 9px; height: 14px; display: block; }
    .spring { flex: 1; }
    .t-production .big, .t-plan .big { margin: 0 7px 0 6px; }
    .t-production .field { margin: 0 4px 0 6px; }
    .pair { display: flex; align-items: center; gap: 6px; }
    .right-tools { display: flex; align-items: center; gap: 16px; padding-right: 1px; }
    .right-tools .list { margin-left: -7px; }
    .t-plan { padding-left: 3px; }
    .t-plan .icon-button { margin: 0 2px; }
    .t-plan > .icon-button { margin-right: 5px; }
    .t-plan .tiny-field { margin: 0 6px; }
    .t-plan .mid-field { margin: 0 1px 0 8px; }
    .clip-end { display: flex; align-items: center; min-width: 0; flex: 1; overflow: hidden; }
    .t-ordered { height: 49px; padding: 11px 0 0; }
    .t-ordered .bar { width: 1px; height: 38px; background: #8290a8; box-shadow: 1px 0 #e9edf4; margin: 0 0 0 1px; }
    .t-ordered .field { margin: 0 4px; }
    .t-ordered .right-tools { padding-right: 9px; }

    .grid { position: relative; display: grid; grid-template-columns: minmax(0, 1fr); font-size: 16px; line-height: 22px; }
    .grid.has-v { grid-template-columns: minmax(0, 1fr) 17px; }
    .grid-main { min-width: 0; background: #fff; }
    .group-panel { height: 40px; padding: 10px 8px 8px; background: #c8d0e2; color: #9ca6ba; }
    .viewport { overflow: hidden; background: #fff; }
    .tall { height: 267px; }
    .mid { height: 181px; }
    .open { height: 353px; }
    .small { height: 75px; }
    .stages { height: 194px; }
    table { width: 100%; table-layout: fixed; border-collapse: separate; border-spacing: 0; }
    .c-ind { width: 12px; }
    th, td { padding: 0 2px; overflow: hidden; white-space: nowrap; text-align: left; font-weight: 400; }
    th { position: relative; height: 26px; padding: 0 0 0 1px; border-top: 1px solid #aab5c9; border-left: 1px solid #d3d8e1; color: #566077; background: linear-gradient(#eef0f4, #e4e7ed 50%, #dadee7 52%); }
    td { height: 23px; background: #f5f7fa; }
    td:last-child { padding-right: 0; }
    .even td { background: #eaf6ed; }
    .sel td { background: #fff5df; }
    .filter td { height: 25px; border-bottom: 2px solid #b3bccd; background: #eaf6ed; color: #747a80; text-align: center; }
    th.ind, td.ind, .filter td.ind, .sel td.ind, .even td.ind { padding: 0; border-left: 0; border-right: 1px solid #d3d8e1; background: linear-gradient(#eef0f4, #e2e5ec 50%, #d8dce6 52%); }
    .filter td.ind { border-bottom: 0; }
    td.k-n { text-align: right; }
    td.k-h .icon { margin: 0 auto; width: 15px; height: 15px; }
    td.k-h:last-child .icon { margin: 0 -6px 0 auto; }
    td.k-d { font-size: 11px; }
    td.k-p { padding: 0; }
    .progress { height: 23px; line-height: 23px; text-align: center; border: 1px solid #8490a8; border-bottom-width: 2px; border-top: 0;
      background-repeat: no-repeat; background-image: linear-gradient(#c2f3bd, #8ce78a 38%, #06cf22 42%, #12c52c 70%, #2be23c), linear-gradient(#f4f5f9, #e4e7ee 50%, #e9ebf3); }
    .status { display: flex; align-items: center; gap: 4px; padding-left: 1px; }
    .tri { width: 0; height: 0; display: block; flex: none; border: 4px solid transparent; color: #7d879a; }
    .tri.left { border-right-color: currentColor; border-left: 0; }
    .tri.right { border-left-color: currentColor; border-right: 0; }
    .tri.up { border-bottom-color: currentColor; border-top: 0; }
    .tri.down { border-top-color: currentColor; border-bottom: 0; }
    .tri.cur { color: #10182c; margin: 0 auto; }
    .tri.multi { color: #868b96; margin: 0 auto; }
    .tri.sort { position: absolute; right: 8px; top: 10px; color: #99a0ae; }
    .foot { display: flex; align-items: center; height: 39px; overflow: hidden; border-top: 1px solid #a9b4c8; background: linear-gradient(#eceef3, #e2e5ec 50%, #dadee7 52%); }
    .foot-lead { width: 12px; flex: none; }
    .foot-slot { flex: none; padding: 0 1px 0 2px; }
    .sum { display: flex; height: 32px; align-items: center; padding: 0 6px 0 11px; border: 1px solid #cdd3de; border-radius: 2px; background: #fff; }
    .sum span { overflow: hidden; white-space: nowrap; }
    .foot-slot:nth-child(n+4) .sum { padding-left: 6px; }
    .sum.right { justify-content: flex-end; }
    .hscroll { grid-column: 1; display: flex; align-items: center; height: 17px; padding: 0 6px; background: #e8e9ec; border-top: 1px solid #f6f7f9; }
    .hscroll .tri.left { margin-right: 7px; }
    .hscroll .tri.right { margin-left: auto; }
    .vscroll { display: flex; flex-direction: column; align-items: center; padding: 6px 0; background: #e8e9ec; border-left: 1px solid #f6f7f9; }
    .vscroll .tri.up { margin-bottom: 7px; }
    .vscroll .tri.down { margin-top: auto; }
    .thumb { display: grid; place-items: center; border: 1px solid #a2abbc; border-radius: 2px; box-shadow: inset 0 0 0 1px #f4f6f9; flex: none; }
    .hscroll .thumb { height: 15px; background: linear-gradient(#eff1f5, #dde1e9 50%, #cad0dc); }
    .vscroll .thumb { width: 14px; background: linear-gradient(90deg, #eff1f5, #dde1e9 50%, #cad0dc); }
    .hscroll .thumb b { width: 8px; height: 8px; background: repeating-linear-gradient(90deg, #6c768a 0 2px, transparent 2px 3px); }
    .vscroll .thumb b { width: 8px; height: 8px; background: repeating-linear-gradient(#6c768a 0 2px, transparent 2px 3px); }

    .gap-dots { display: grid; place-items: center; height: 7px; }
    .gap-dots::before, .hide::before { content: ""; width: 14px; height: 2px; flex: none; background: repeating-linear-gradient(90deg, #8392ae 0 2px, transparent 2px 4px); }
    .tabs { display: flex; gap: 1px; padding: 0 3px 0 4px; height: 26px; align-items: flex-end; }
    .tabs:has(+ .panel) { height: 25px; }
    .tab { flex-basis: 0; min-width: 0; height: 25px; display: flex; align-items: center; justify-content: center; gap: 6px; white-space: nowrap;
      border: 1px solid #98a4b8; border-bottom: 0; border-right-width: 2px; border-radius: 2px 2px 0 0; background: linear-gradient(#f3f4f8, #dcdfe8 45%, #cdd3df 55%, #ccd1de); box-shadow: inset 1px 1px #f8f9fb; }
    .tab.on { height: 26px; background: linear-gradient(#fffaf0, #fff2cf 50%, #ffe5a0 54%, #ffe5a0); border-right-width: 1px; z-index: 1; }
    .panel { display: flex; margin: 0 1px; border: 1px solid #98a4b8; border-radius: 2px; position: relative; padding: 4px 0 5px; }
    .panel::before, .panel::after { content: ""; position: absolute; left: 0; right: 0; height: 4px; background: #ffe5a0; }
    .panel::before { top: 0; }
    .panel::after { bottom: 0; }
    .panel-grid { flex: 1; min-width: 0; }
    .side-tools { width: 32px; flex: none; display: flex; flex-direction: column; align-items: center; gap: 12px; padding-top: 7px; contain: size; overflow: hidden; }
    .side-tools hr { width: 100%; height: 2px; flex: none; border-top: 1px solid #8290a8; background: #fff; margin: -7px 0 -6px; }
    .side-tools button { display: block; flex: none; }
    .hide { height: 24px; width: 100%; display: flex; flex-direction: column; align-items: center; gap: 2px; padding-top: 2px; font-size: 11px; line-height: 16px; letter-spacing: 3px; }
    .hide.plain { height: 17px; padding: 0; }
    .hide.plain::before { display: none; }

    .split { display: flex; }
    .pane-left { flex: 574 1 0; min-width: 0; border: 1px solid #98a4b8; margin-bottom: 2px; display: flex; flex-direction: column; }
    .pane-right { flex: 658 1 0; min-width: 0; }
    .sub-tabs { display: flex; height: 27px; padding: 3px 0 0 2px; border-bottom: 1px solid #98a4b8; }
    .sub-tab { height: 24px; padding: 0 10px 0 8px; border: 1px solid #98a4b8; border-bottom: 0; background: linear-gradient(#fffaf0, #fff2cf 50%, #ffe6a3 54%, #ffe6a3); }
    .band { height: 4px; background: #ffe5a0; }
    .inset { padding: 0 10px 0 11px; flex: 1; }
    .strip { display: grid; place-items: center; height: 7px; background: #e4e8ef; }
    .strip::before { content: ""; width: 14px; height: 2px; background: repeating-linear-gradient(90deg, #8392ae 0 2px, transparent 2px 4px); }
    .tail { height: 16px; padding-top: 3px; display: grid; justify-items: center; align-items: start; }
    .tail::before { content: ""; width: 14px; height: 2px; background: repeating-linear-gradient(90deg, #8392ae 0 2px, transparent 2px 4px); }

    .status-bar { display: grid; grid-template-columns: 429fr 431fr 436fr 134fr; height: 17px; background: linear-gradient(#e6e9ef 50%, #dadee7 50%); color: #4d5870; line-height: 17px; }
    .status-bar span { padding-left: 4px; white-space: pre; }
    .status-bar span + span { border-left: 1px solid #cdd2dc; }
    .status-bar .version { display: flex; justify-content: space-between; align-items: center; padding-right: 3px; }
    .status-bar time { text-align: right; padding-right: 5px; white-space: pre; border-left: 1px solid #cdd2dc; }

    .menu { position: absolute; z-index: 6; left: -1px; top: 39px; width: 341px; padding: 0 3px 4px; border: 2px solid #ee1c24; border-radius: 6px; background: #f1f1f1; color: #0b0d12;
      box-shadow: inset 2px 2px 4px #9a9a9a, inset -3px -3px 3px #8b8b8b, 2px 2px 3px #8a93a5; font-size: 12px; line-height: 16px; }
    .menu-item { display: flex; align-items: center; width: 100%; height: 22px; padding: 0 22px 0 2px; text-align: left; white-space: nowrap; }
    .menu-item span { margin-left: 12px; flex: 1; }
    .menu-item kbd { font: inherit; }
    .menu-item:disabled { color: #7b7b7b; }
    .menu hr { height: 2px; margin: 2px 3px 2px 27px; border-top: 1px solid #cfcfcf; }
    .mark { position: absolute; z-index: 4; border: 2px solid #ee1c24; border-radius: 6px; box-shadow: inset 1px 1px 4px #00000055, 1px 1px 2px #00000055; pointer-events: none; }
    .mark-tool { left: -1px; top: 0; width: 41px; height: 40px; }
    .mark-nav { left: 6px; top: -1px; width: 141px; height: 24px; }
    .mark-row { left: 0; height: 24px; }
    .mark-row.first { top: 161px; width: 107px; }
    .mark-row.second { top: 230px; width: 94px; }
    .callout { position: absolute; z-index: 7; width: 32px; height: 32px; overflow: visible; filter: drop-shadow(2px 2px 2px #00000066); }
    .num { font: 14px "DejaVu Sans", sans-serif; fill: #fff; }
    .at-nav { left: 141px; top: -8px; }
    .plan .at-nav { left: 144px; }
    .at-tool { left: 54px; top: -38px; }
    .plan .at-tool { top: -43px; left: 53px; }
    .at-row-first { left: -57px; top: 148px; }
    .at-row-second { left: -60px; top: 225px; }
  `;

  private sidebar(): TemplateResult {
    const current = this.view === "plan" ? 0 : 1;
    const chev = (up: boolean) => html`<svg class="chev" viewBox="0 0 11 10"><path d=${up ? "M.5 5 5.500.8 10.500 5M.5 9 5.500 4.800 10.500 9" : "M.5.8 5.500 5 10.500.8M.5 4.800 5.500 9 10.500 4.800"} fill="none" stroke="#d5dceb" stroke-width="1.100" /></svg>`;
    return html`
      <aside class="side">
        <div class="search">
          <input aria-label="Szukaj" .value=${"prod"}>
          <button aria-label="Wyczyść"><svg viewBox="0 0 14 12"><path d="M3.500 0H14v12H3.500L0 6z" fill="#a3abb8" /><path d="m6 3.800 4.500 4.500M10.500 3.800 6 8.300" stroke="#fff" stroke-width="1.500" /></svg></button>
        </div>
        <button class="notice">POWIADOMIENIA (62)</button>
        <nav class="nav">
          ${GROUPS.map(([i, t], n) => html`
            <button class="nav-group">${icon(i)}<span>${t}</span>${chev(n === 1)}</button>
            ${n === 1 ? html`<ul class="pages">${PAGES.map((p, k) => html`
              <li><a href="#">${p}</a>${k === current ? html`<span class="mark mark-nav"></span>${callout(1, "at-nav")}` : nothing}</li>`)}</ul>` : nothing}`)}
        </nav>
        <label class="single"><input class="check" type="checkbox" checked>Rozwijaj jedną grupę</label>
      </aside>`;
  }

  private production(): TemplateResult {
    return html`
      <div class="toolbar t-production">
        ${toolButton("plus", "Dodaj")}${orderTools("00005/2025")}
        ${combo("big", "WSZYSTKIE", "Status")}${checkbox("Aktywne", true)}
        <input class="field" aria-label="Filtr">
        <span class="pair"><button class="icon-button" aria-label="Szukaj">${icon("magnifier")}</button><button class="icon-button" aria-label="Wyczyść filtr">${icon("spark")}</button>${checkbox("Dokładnie")}</span>
        <div class="period">
          <div class="nav-period">${icon("swap")}
            <button aria-label="Wstecz"><svg class="angle" viewBox="0 0 9 14"><path d="M8 .5 1.500 7 8 13.500" fill="none" stroke="#1f2a44" stroke-width="1.200" /></svg></button>
            ${combo("year", "Rok", "Okres")}
            <button aria-label="Dalej"><svg class="angle" viewBox="0 0 9 14"><path d="M1 .5 7.500 7 1 13.500" fill="none" stroke="#1f2a44" stroke-width="1.200" /></svg></button>
          </div>
          <div><span class="combo date"><input aria-label="Od" .value=${"01.01.2025"}>${arrowDown}</span><span class="combo date"><input aria-label="Do" .value=${"31.12.2025"}>${arrowDown}</span></div>
        </div>
        <span class="spring"></span>
        <div class="right-tools">
          <button class="icon-button" aria-label="Kolumny">${icon("columnsPlus")}</button><button class="icon-button" aria-label="Układ">${icon("columnsPlus")}</button>
          <button class="icon-button" aria-label="Odśwież">${icon("refresh")}</button>${combo("list", "Lista", "Widok")}
        </div>
      </div>
      ${grid(ordersGrid())}
      <div class="gap-dots"></div>
      ${tabRow([T.czyn(163), T.braki(117), T.param(168), T.czas(220), T.ubo(235), T.obl(162), T.elem(160)])}
      ${tabRow([T.oper(154), T.wiz(179), T.zap(228, true), T.uwagi(127), T.rcp(108), T.prac(174), T.wp(110), T.pw(146)])}
      ${detail(["plus", "palette", "boxes", "expand", "reload", "-", "layersRed", "plusBlue", "columnsPlus", "minus"], demandGrid())}
      <button class="hide">UKRYJ SZCZEGÓŁY [F8]</button>`;
  }

  private plan(): TemplateResult {
    return html`
      <div class="split">
        <section class="pane-left">
          <div class="sub-tabs"><button class="sub-tab">Zamówione</button></div>
          <div class="band"></div>
          <div class="inset">
            <div class="toolbar t-ordered">
              ${toolButton("cross", "Usuń")}<span class="bar"></span>${toolButton("driver", "Plan")}${toolButton("boxes", "Rez.")}${toolButton("clip", "Uwagi")}${toolButton("funnel", "Fltr")}
              <input class="field" aria-label="Filtr">
              <span class="pair"><button class="icon-button" aria-label="Szukaj">${icon("magnifier")}</button><button class="icon-button" aria-label="Wyczyść filtr">${icon("spark")}</button>${checkbox("Dokładnie")}</span>
              <span class="spring"></span>
              <div class="right-tools"><button class="icon-button" aria-label="Odśwież">${icon("refresh")}</button><button class="icon-button" aria-label="Kolumny">${icon("columnsPlus")}</button><button class="icon-button" aria-label="Układ">${icon("columnsPlus")}</button></div>
            </div>
            ${grid(orderedGrid())}
            <button class="hide plain">UKRYJ SZCZEGÓŁY [F8]</button>
            <div class="strip"></div>
            ${tabRow([{ i: "docRound", t: "Uwagi do zamówienia", w: 197 }, { i: "docBlue", t: "Uwagi klienta do produkcji", w: 226 }, T.elem(117)])}
            ${tabRow([{ i: "swap", t: "Zapotrzebowanie", w: 192, on: true }, { i: "chart", t: "Czasochłonność", w: 181 }, { i: "docOrange", t: "Uwagi bieżące", w: 168 }])}
            ${detail(["expand", "-", "layersRed", "plusBlue", "columnsPlus"], planDemandGrid())}
            <div class="tail"></div>
          </div>
          <div class="band"></div>
        </section>
        <div class="vdots"></div>
        <section class="pane-right">
          <div class="toolbar t-plan">
            <button class="icon-button" aria-label="Przenieś">${icon("login")}</button>
            ${orderTools("00006/2025")}
            ${combo("big", "WSZYSTKIE", "Status")}${checkbox("Aktywne", true)}
            <span class="clip-end">
              <input class="field tiny-field" aria-label="Numer">${icon("columnsPlus")}<input class="field mid-field" aria-label="Filtr">
              <span class="pair"><button class="icon-button" aria-label="Szukaj">${icon("magnifier")}</button><button class="icon-button" aria-label="Wyczyść filtr">${icon("spark")}</button>${checkbox("Dokładnie")}</span>
            </span>
          </div>
          ${grid(planOrdersGrid())}
          <div class="gap-dots"></div>
          ${tabRow([T.prac(128), T.wp(81), T.pw(104), T.czyn(120), T.braki(85), T.param(125)])}
          ${tabRow([T.czas(182), T.ubo(196), T.obl(135), T.elem(132)])}
          ${tabRow([T.oper(125, true), T.wiz(145), T.zap(182), T.uwagi(102), T.rcp(91)])}
          ${detail(["plus", "pencil", "arrowNE", "arrowNW", "columnsPlus"], stagesGrid())}
          <button class="hide">UKRYJ SZCZEGÓŁY [F8]</button>
        </section>
      </div>`;
  }

  render() {
    const plan = this.view === "plan";
    const close = html`<svg class="x" viewBox="0 0 9 8"><path d="m1 .8 7 6.400M8 .8 1 7.200" stroke="currentColor" stroke-width="2" /></svg>`;
    return html`
      <article class="window ${this.view}">
        <header class="title">${icon("logo")}<h1>System zarządzania przedsiębiorstwem Modus demo</h1>
          <div class="win-buttons">
            <button class="win-button" aria-label="Minimalizuj"><svg viewBox="0 0 12 10"><path d="M1.500 5.500h9v3h-9z" fill="#fff" stroke="#4f5a70" /></svg></button>
            <button class="win-button" aria-label="Maksymalizuj"><svg viewBox="0 0 12 10"><path d="M1.500.5h9v8h-9z" fill="#fff" stroke="#4f5a70" /><path d="M4.500 3.500h3v2h-3z" fill="none" stroke="#4f5a70" /></svg></button>
            <button class="win-button close" aria-label="Zamknij"><svg viewBox="0 0 12 10"><path d="m2 1 8 8M10 1 2 9" stroke="#4a3a42" stroke-width="3.400" /><path d="m2 1 8 8M10 1 2 9" stroke="#fff" stroke-width="2" /></svg></button>
          </div>
        </header>
        <nav class="menubar">${MENUBAR.map(([w, i, t, c]) => html`<button class=${c ?? ""} style="flex-grow:${w}" aria-label=${t || i}>${i ? icon(i) : nothing}${t}</button>`)}</nav>
        <div class="body">
          ${this.sidebar()}
          <div class="splitter"></div>
          <main class="main">
            <div class="doc-tabs">
              <button class="doc-tab"><span>${plan ? "PLAN PRODUKCJI" : "· PRODUKCJA W TOKU ·"}</span>${close}</button>
              <span class="doc-actions">${arrowDown}${close}</span>
            </div>
            <div class="doc">${plan ? this.plan() : this.production()}</div>
          </main>
        </div>
        <footer class="status-bar">
          <span>Copyright © 2005-2025 RHO Software</span>
          <span class="version">Modus demo v.5.0.0.701<i class="tri up"></i></span>
          <span>Nr licencji: 2223/111111111111111</span>
          <time>${plan ? "2025-06-03,  13:24:33" : "2025-06-03,  13:22:56"}</time>
        </footer>
      </article>`;
  }
}

@customElement("app-root")
export class AppRoot extends LitElement {
  static styles = css`
    :host { display: flex; flex-direction: column; gap: 3px; padding-bottom: 5px; background: #fff; }
    .first { margin-right: 1px; }
    .second { margin-left: 1px; }
  `;
  render() {
    return html`<modus-window class="first" view="production"></modus-window><modus-window class="second" view="plan"></modus-window>`;
  }
}
